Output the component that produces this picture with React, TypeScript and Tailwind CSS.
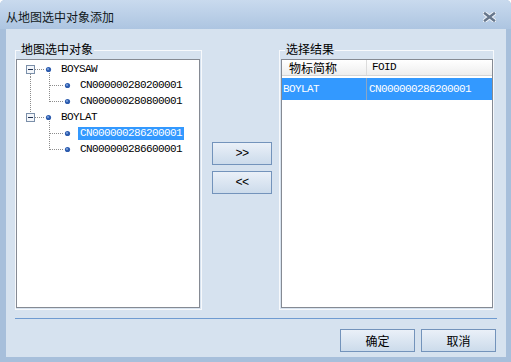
import React from 'react';

const cjk = "font-['Noto_Sans_CJK_SC','Noto_Sans',sans-serif] text-[12px]";
const mono = "font-['Liberation_Mono','Noto_Sans_CJK_SC',monospace] text-[11px] tracking-[-0.6px]";

const groups = [
  { label: 'BOYSAW', children: ['CN000000280200001', 'CN000000280800001'] },
  { label: 'BOYLAT', children: ['CN000000286200001', 'CN000000286600001'] },
];

const selectedId = 'CN000000286200001';

const DOT = '#8c8c8c';

const Bullet = ({ cx }: { cx: number }) => (
  <g>
    <circle cx={cx} cy="8.5" r="2.6" fill="#2d5cae" />
    <circle cx={cx - 0.5} cy="8" r="1" fill="#7ea4df" />
  </g>
);

const ParentRow = ({ label, first, last }: { label: string; first: boolean; last: boolean }) => (
  <div className="flex h-4 items-center">
    <svg width="42" height="16" className="shrink-0">
      {!first && <line x1="13.5" y1="0" x2="13.5" y2="4" stroke={DOT} strokeDasharray="1 1" />}
      {!last && <line x1="13.5" y1="13" x2="13.5" y2="16" stroke={DOT} strokeDasharray="1 1" />}
      <line x1="18" y1="8.5" x2="28" y2="8.5" stroke={DOT} strokeDasharray="1 1" />
      <line x1="32.5" y1="12" x2="32.5" y2="16" stroke={DOT} strokeDasharray="1 1" />
      <rect x="9.5" y="4.5" width="8" height="8" fill="#f3f6fa" stroke="#7b8fa9" />
      <line x1="11" y1="8.5" x2="16" y2="8.5" stroke="#1f2f4f" />
      <Bullet cx={31.5} />
    </svg>
    <span className={`${mono} px-[2px] leading-[13px] text-black`}>{label}</span>
  </div>
);

const ChildRow = ({ label, trunk, lastChild }: { label: string; trunk: boolean; lastChild: boolean }) => {
  const sel = label === selectedId;
  return (
    <div className="flex h-4 items-center">
      <svg width="61" height="16" className="shrink-0">
        {trunk && <line x1="13.5" y1="0" x2="13.5" y2="16" stroke={DOT} strokeDasharray="1 1" />}
        <line x1="32.5" y1="0" x2="32.5" y2={lastChild ? 9 : 16} stroke={DOT} strokeDasharray="1 1" />
        <line x1="33" y1="8.5" x2="47" y2="8.5" stroke={DOT} strokeDasharray="1 1" />
        <Bullet cx={50.5} />
      </svg>
      <span
        className={`${mono} px-[2px] leading-[13px] ${sel ? 'bg-[#3399ff] text-white' : 'text-black'}`}
      >
        {label}
      </span>
    </div>
  );
};

const Btn = ({ children, className = '' }: { children: React.ReactNode; className?: string }) => (
  <button
    className={`flex h-[23px] items-center justify-center border border-[#7393bb] bg-gradient-to-b from-[#eaf0f8] to-[#ccdbeb] text-black ${className}`}
  >
    {children}
  </button>
);

export default function App() {
  return (
    <div className="flex h-[362px] w-[511px] flex-col overflow-hidden rounded-t-[5px] bg-[#a7bfdb]">
      {/* title bar */}
      <div className="flex h-[29px] shrink-0 items-center justify-between bg-gradient-to-b from-[#c9daee] to-[#adc5e1] pl-[6px] pr-[15px] pt-[5px]">
        <span className={`${cjk} leading-4 text-[#101820]`}>从地图选中对象添加</span>
        <svg width="13" height="10" viewBox="0 0 13 10">
          <path d="M2 1.5 L11 8.5 M11 1.5 L2 8.5" stroke="#eef3f9" strokeWidth="4.4" strokeLinecap="square" />
          <path d="M2 1.5 L11 8.5 M11 1.5 L2 8.5" stroke="#66768b" strokeWidth="2.4" strokeLinecap="square" />
        </svg>
      </div>

      {/* body */}
      <div className="ml-[6px] mr-[5px] flex h-[328px] flex-col bg-[#d6e2ef] pt-[13px]">
        <div className="flex pl-[9px]">
          <fieldset className="flex h-[268px] w-[187px] flex-col border border-[#f7f9fc] pb-[1px] pr-[1px]">
            <legend className={`${cjk} ml-[4px] px-[1px] pb-[3px] leading-[14px] text-black`}>地图选中对象</legend>
            <div className="flex-1 border border-[#858a93] bg-white pt-[1px]">
              {groups.map((g, gi) => (
                <div key={g.label}>
                  <ParentRow label={g.label} first={gi === 0} last={gi === groups.length - 1} />
                  {g.children.map((c, ci) => (
                    <ChildRow
                      key={c}
                      label={c}
                      trunk={gi < groups.length - 1}
                      lastChild={ci === g.children.length - 1}
                    />
                  ))}
                </div>
              ))}
            </div>
          </fieldset>

          <div className="flex w-[77px] flex-col gap-[6px] pl-[10px] pt-[100px]">
            <Btn className={`${mono} w-[60px] text-[12px]`}>&gt;&gt;</Btn>
            <Btn className={`${mono} w-[60px] text-[12px]`}>&lt;&lt;</Btn>
          </div>

          <fieldset className="flex h-[268px] w-[215px] flex-col border border-[#f7f9fc] pb-[1px] pl-[1px]">
            <legend className={`${cjk} ml-[4px] px-[1px] pb-[3px] leading-[14px] text-black`}>选择结果</legend>
            <div className="flex flex-1 flex-col border border-[#858a93] bg-white">
              <div className="flex h-[16px] border-b border-[#d5d5d5] bg-gradient-to-b from-white to-[#eeeeee]">
                <div className={`${cjk} flex w-[85px] items-center border-r border-[#dcdcdc] pl-[7px] leading-4 text-black`}>
                  物标简称
                </div>
                <div className={`${mono} flex items-center pl-[5px] text-black`}>FOID</div>
              </div>
              <div className="mt-[2px] flex h-[22px] bg-[#3399ff] text-white">
                <div className={`${mono} flex w-[85px] items-center border-r border-[#8aa6c6] pl-[1px]`}>BOYLAT</div>
                <div className={`${mono} flex items-center pl-[2px]`}>CN000000286200001</div>
              </div>
            </div>
          </fieldset>
        </div>

        <div className="mx-[9px] mt-[8px] h-px bg-[#6f9bd1]" />

        <div className="mt-[10px] flex justify-end gap-[6px] pr-[10px]">
          <Btn className={`${cjk} w-[75px]`}>确定</Btn>
          <Btn className={`${cjk} w-[75px]`}>取消</Btn>
        </div>
      </div>
    </div>
  );
}
